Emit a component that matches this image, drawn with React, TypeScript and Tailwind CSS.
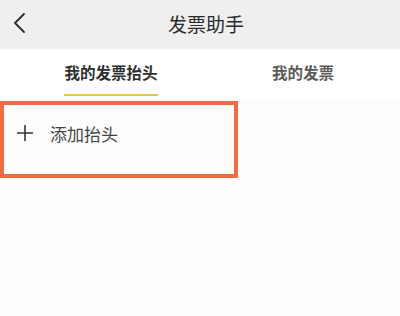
import React from 'react';

const font = { fontFamily: '"Noto Sans CJK SC", "Noto Sans", sans-serif' };

export default function App() {
    return (
        <div className="w-[400px] h-[316px] bg-[#fdfdfd] overflow-hidden" style={font}>
            {/* header */}
            <div className="relative h-[49px] bg-[#efefef] flex items-center justify-center">
                <svg className="absolute left-[12px] top-[12px]" width="16" height="22" viewBox="0 0 16 22" fill="none">
                    <path d="M12 2 L3 11 L12 20" stroke="#2b2b2b" strokeWidth="1.8" strokeLinecap="round" strokeLinejoin="round" />
                </svg>
                <span className="text-[19px] leading-none text-[#2a2a2a] ml-[12px] -mt-[2px]">发票助手</span>
            </div>

            {/* tabs */}
            <div className="h-[52px] bg-white flex">
                <div className="ml-[64px] flex flex-col items-center">
                    <span className="mt-[14px] text-[15.5px] leading-[18px] font-bold text-[#2e2e2e]">我的发票抬头</span>
                    <div className="mt-[13px] h-[2px] w-[94px] bg-[#e9c93c]" />
                </div>
                <div className="ml-[114px]">
                    <span className="block mt-[14px] text-[15.5px] leading-[18px] font-bold text-[#5a5a5a]">我的发票</span>
                </div>
            </div>

            {/* add header row */}
            <div className="w-[238px] h-[77px] border-[4px] border-[#ee6d45] flex items-start pt-[19px]">
                <svg className="ml-[12px]" width="18" height="18" viewBox="0 0 18 18">
                    <path d="M9 1 V17 M1 9 H17" stroke="#333" strokeWidth="1.6" />
                </svg>
                <span className="ml-[16px] mt-[1px] text-[17px] leading-[18px] text-[#444]">添加抬头</span>
            </div>
        </div>
    );
}
